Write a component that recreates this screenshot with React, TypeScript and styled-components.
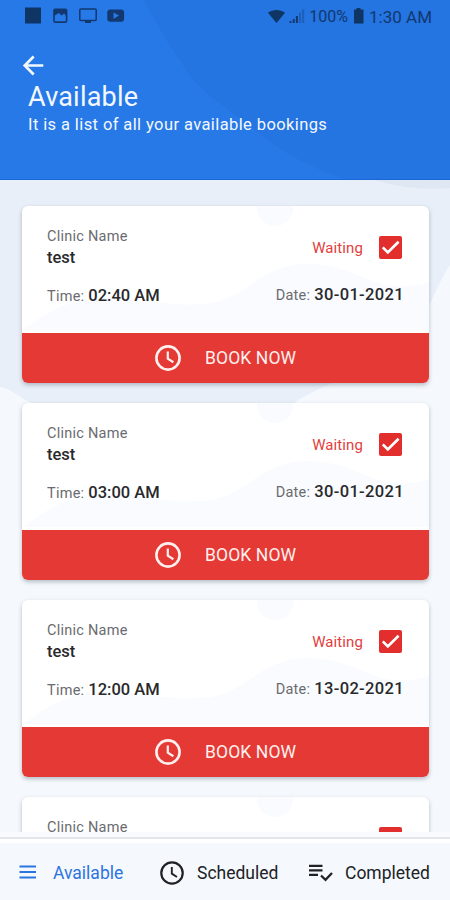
import React from "react";
import styled, { createGlobalStyle } from "styled-components";

const GlobalStyle = createGlobalStyle`
  * { box-sizing: border-box; }
  body { margin: 0; font-family: Roboto, "Liberation Sans", sans-serif; background: #f5f9fd; }
`;

const Screen = styled.div`
  width: 450px;
  height: 900px;
  display: flex;
  flex-direction: column;
  overflow: hidden;
  background: #f5f9fd;
`;

const Backdrop = styled.svg`
  position: absolute;
  inset: 0;
  width: 100%;
  height: 100%;
  display: block;
`;

const Header = styled.header`
  position: relative;
  flex: none;
  height: 180px;
  background: #2779e8;
  color: #f3f8ff;
  border-bottom: 1px solid #1767d6;
`;

const HeaderContent = styled.div`
  position: relative;
  display: flex;
  flex-direction: column;
`;

const StatusBar = styled.div`
  height: 32px;
  padding: 0 18px 0 24px;
  display: flex;
  justify-content: space-between;
  align-items: center;
  color: #12386f;
`;

const StatusGroup = styled.div<{ $gap: number }>`
  display: flex;
  align-items: center;
  gap: ${(p) => p.$gap}px;
`;

const StatusText = styled.span<{ $size: number }>`
  font-size: ${(p) => p.$size}px;
  line-height: 20px;
  padding-top: 1px;
  white-space: nowrap;
`;

const BackButton = styled.button`
  width: 28px;
  height: 28px;
  margin: 20px 0 0 18px;
  padding: 0;
  border: 0;
  background: none;
  color: inherit;
  display: flex;
`;

const Title = styled.h1`
  margin: 1px 0 0 28px;
  font-size: 27px;
  font-weight: 400;
  line-height: 32px;
  letter-spacing: 0.2px;
`;

const Subtitle = styled.p`
  margin: 2px 0 0 28px;
  font-size: 16.5px;
  line-height: 20px;
  letter-spacing: 0.4px;
  white-space: nowrap;
`;

const ListArea = styled.main`
  position: relative;
  flex: none;
  height: 652px;
  overflow: hidden;
`;

const CardList = styled.div`
  position: relative;
  display: flex;
  flex-direction: column;
  gap: 20px;
  padding: 26px 21px 0 22px;
`;

const CardShell = styled.article`
  position: relative;
  flex: none;
  height: 177px;
  border-radius: 6px;
  background: #fff;
  box-shadow: 0 2px 4px rgba(60, 75, 95, 0.35);
  overflow: hidden;
  display: flex;
  flex-direction: column;
`;

const CardBody = styled.div`
  position: relative;
  height: 127px;
  padding: 21px 25px 0;
  display: flex;
  flex-direction: column;
  justify-content: flex-start;
`;

const Row = styled.div`
  position: relative;
  display: flex;
  justify-content: space-between;
`;

const ClinicBlock = styled.div`
  display: flex;
  flex-direction: column;
`;

const Label = styled.span`
  font-size: 14.5px;
  line-height: 20px;
  color: #6b6b6f;
  letter-spacing: 0.25px;
  white-space: nowrap;
`;

const Value = styled.span<{ $spacing?: number }>`
  font-size: 16.5px;
  line-height: 21px;
  font-weight: 500;
  color: #29292c;
  letter-spacing: ${(p) => p.$spacing ?? 0}px;
  white-space: nowrap;
`;

const StatusBlock = styled.div`
  display: flex;
  gap: 16px;
  height: 41px;
  align-items: center;
  padding: 0 2px 0 0;
`;

const Waiting = styled.span`
  font-size: 15px;
  line-height: 20px;
  color: #e23e3d;
  letter-spacing: 0.1px;
`;

const Check = styled.span`
  width: 23px;
  height: 23px;
  border-radius: 2px;
  background: #e22e2d;
  display: flex;
`;

const Pair = styled.div<{ $top: number }>`
  display: flex;
  align-items: baseline;
  gap: 4px;
  margin-top: ${(p) => p.$top}px;
  height: 21px;
`;

const BookButton = styled.button`
  flex: none;
  height: 50px;
  width: 100%;
  border: 0;
  padding: 0 0 0 133px;
  background: #e53935;
  color: #fff0ee;
  font-family: inherit;
  display: flex;
  align-items: center;
  gap: 24px;
`;

const BookLabel = styled.span`
  font-size: 17.5px;
  line-height: 20px;
  letter-spacing: 0.1px;
  white-space: nowrap;
`;

const Nav = styled.nav`
  flex: none;
  height: 68px;
  padding-top: 5px;
  background: #f9fbfd;
`;

const NavItems = styled.div`
  height: 63px;
  background: #f5f9fd;
  border-top: 2px solid #e3e6e9;
  box-shadow: inset 0 4px 0 #fff;
  padding: 6px 19px 0 19px;
  display: flex;
  align-items: center;
`;

const NavItem = styled.a<{ $active?: boolean; $gap: number; $width?: number }>`
  display: flex;
  align-items: center;
  gap: ${(p) => p.$gap}px;
  width: ${(p) => (p.$width ? `${p.$width}px` : "auto")};
  color: ${(p) => (p.$active ? "#2b74e2" : "#202225")};
`;

const NavLabel = styled.span`
  font-size: 17.5px;
  line-height: 22px;
`;

const Clock = ({ size, stroke }: { size: number; stroke: number }) => (
  <svg width={size} height={size} viewBox="0 0 26 26" fill="none" stroke="currentColor" strokeWidth={stroke}>
    <circle cx="13" cy="13" r="11.6" />
    <path d="M12.8 6.5v7.2l5.6 3.6" strokeWidth={stroke * 0.85} />
  </svg>
);

type Booking = { clinic?: string; status?: string; time?: string; date?: string };

const bookings: Booking[] = [
  { clinic: "test", status: "Waiting", time: "02:40 AM", date: "30-01-2021" },
  { clinic: "test", status: "Waiting", time: "03:00 AM", date: "30-01-2021" },
  { clinic: "test", status: "Waiting", time: "12:00 AM", date: "13-02-2021" },
  {},
];

const BookingCard = ({ clinic, status, time, date }: Booking) => (
  <CardShell>
    <CardBody>
      <Backdrop viewBox="0 0 407 127" preserveAspectRatio="none">
        <circle cx="253" cy="2" r="18" fill="#f9fbfe" />
        <path
          d="M0 125C28 104 42 96 75 92C115 88 135 101 180 98C225 95 234 61 281 58C323 56 348 79 373 80C390 81 398 79 407 76V124H0Z"
          fill="#f9fbfe"
        />
      </Backdrop>
      <Row>
        <ClinicBlock>
          <Label>Clinic Name</Label>
          {clinic && <Value>{clinic}</Value>}
        </ClinicBlock>
        <StatusBlock>
          {status && <Waiting>{status}</Waiting>}
          <Check>
            <svg width="23" height="23" viewBox="0 0 23 23" fill="none" stroke="#fff" strokeWidth="2.7">
              <path d="M3.8 11.4l5 5L19.6 5.7" />
            </svg>
          </Check>
        </StatusBlock>
      </Row>
      {time && date && (
        <Row>
          <Pair $top={17}>
            <Label>Time:</Label>
            <Value>{time}</Value>
          </Pair>
          <Pair $top={16}>
            <Label>Date:</Label>
            <Value $spacing={0.35}>{date}</Value>
          </Pair>
        </Row>
      )}
    </CardBody>
    {time && (
      <BookButton>
        <Clock size={26} stroke={2.6} />
        <BookLabel>BOOK NOW</BookLabel>
      </BookButton>
    )}
  </CardShell>
);

export default function App() {
  return (
    <>
      <GlobalStyle />
      <Screen>
        <Header>
          <Backdrop viewBox="0 0 450 180" preserveAspectRatio="none">
            <path d="M143 0C158 24 168 45 183 65C200 95 232 110 258 133C282 153 305 166 345 180H450V0Z" fill="#2474e1" />
          </Backdrop>
          <HeaderContent>
            <StatusBar>
              <StatusGroup $gap={10}>
                <svg width="18" height="18" viewBox="0 0 18 18">
                  <rect x="1" y="0.5" width="16" height="16" fill="#0e3563" />
                </svg>
                <svg width="17" height="18" viewBox="0 0 17 18" fill="none" stroke="currentColor" strokeWidth="1.6">
                  <rect x="2" y="2.3" width="12.6" height="12.8" rx="1" />
                  <path d="M2 9V2.5h12.6V9.5l-2.6-3-2.3 2-3-2.5z" fill="currentColor" stroke="none" />
                </svg>
                <svg width="18" height="18" viewBox="0 0 18 18" fill="none" stroke="currentColor" strokeWidth="1.5">
                  <rect x="0.8" y="2" width="16.4" height="11.5" rx="1" />
                  <path d="M6 15h6" strokeWidth="2" />
                </svg>
                <svg width="18" height="18" viewBox="0 0 18 18">
                  <rect x="0.3" y="2.4" width="16.8" height="12.4" rx="3" fill="#12386f" />
                  <path d="M6.5 5.4l5.5 3.2-5.5 3.3z" fill="#2779e8" />
                </svg>
              </StatusGroup>
              <StatusGroup $gap={4}>
                <svg width="17" height="15" viewBox="0 0 17 15">
                  <path d="M0 3.7C5 .2 12 .2 17 3.7L8.5 14z" fill="#0e3563" />
                </svg>
                <svg width="16" height="16" viewBox="0 0 16 16" fill="#12386f">
                  <path d="M0.5 13h2v2h-2zM3.7 11h2v4h-2zM6.9 8h2v7h-2z" />
                  <path d="M10 4.5h2V15h-2zM13 1.5h2.2V15H13z" opacity="0.35" />
                </svg>
                <StatusText $size={16}>100%</StatusText>
                <svg width="13" height="18" viewBox="0 0 13 18">
                  <path d="M2 2.5h2.5V1h4v1.500H11.500V16.500H2z" fill="#0e3563" />
                </svg>
                <StatusText $size={17}>1:30 AM</StatusText>
              </StatusGroup>
            </StatusBar>
            <BackButton aria-label="Back">
              <svg width="28" height="28" viewBox="0 0 28 28" fill="none" stroke="currentColor" strokeWidth="2.7">
                <path d="M25.300 13.500H7M15.700 4.500L6.700 13.500l9 9" />
              </svg>
            </BackButton>
            <Title>Available</Title>
            <Subtitle>It is a list of all your available bookings</Subtitle>
          </HeaderContent>
        </Header>
        <ListArea>
          <Backdrop viewBox="0 0 450 652">
            <path d="M0 0H450V85C432 112 427 143 400 168C355 198 320 204 291 225C240 252 95 252 32 223C18 217 12 209 0 207Z" fill="#e8eff8" />
            <path d="M375 0C400 8 425 10 450 8V0Z" fill="#dfe8f2" />
          </Backdrop>
          <CardList>
            {bookings.map((b, i) => (
              <BookingCard key={i} {...b} />
            ))}
          </CardList>
        </ListArea>
        <Nav>
          <NavItems>
            <NavItem $active $gap={16} $width={141}>
              <svg width="18" height="18" viewBox="0 0 18 18" stroke="currentColor" strokeWidth="2.1">
                <path d="M0.500 2.500h16.500M0.500 8h16.500M0.500 13.500h16.500" />
              </svg>
              <NavLabel>Available</NavLabel>
            </NavItem>
            <NavItem $gap={13} $width={148}>
              <Clock size={24} stroke={2.4} />
              <NavLabel>Scheduled</NavLabel>
            </NavItem>
            <NavItem $gap={12}>
              <svg width="25" height="20" viewBox="0 0 25 20" fill="none" stroke="currentColor" strokeWidth="2.3">
                <path d="M1 2.800h13.500M1 7.300h13.500M1 11.800h9M13 12.500l4.500 4.300L24 10" />
              </svg>
              <NavLabel>Completed</NavLabel>
            </NavItem>
          </NavItems>
        </Nav>
      </Screen>
    </>
  );
}
